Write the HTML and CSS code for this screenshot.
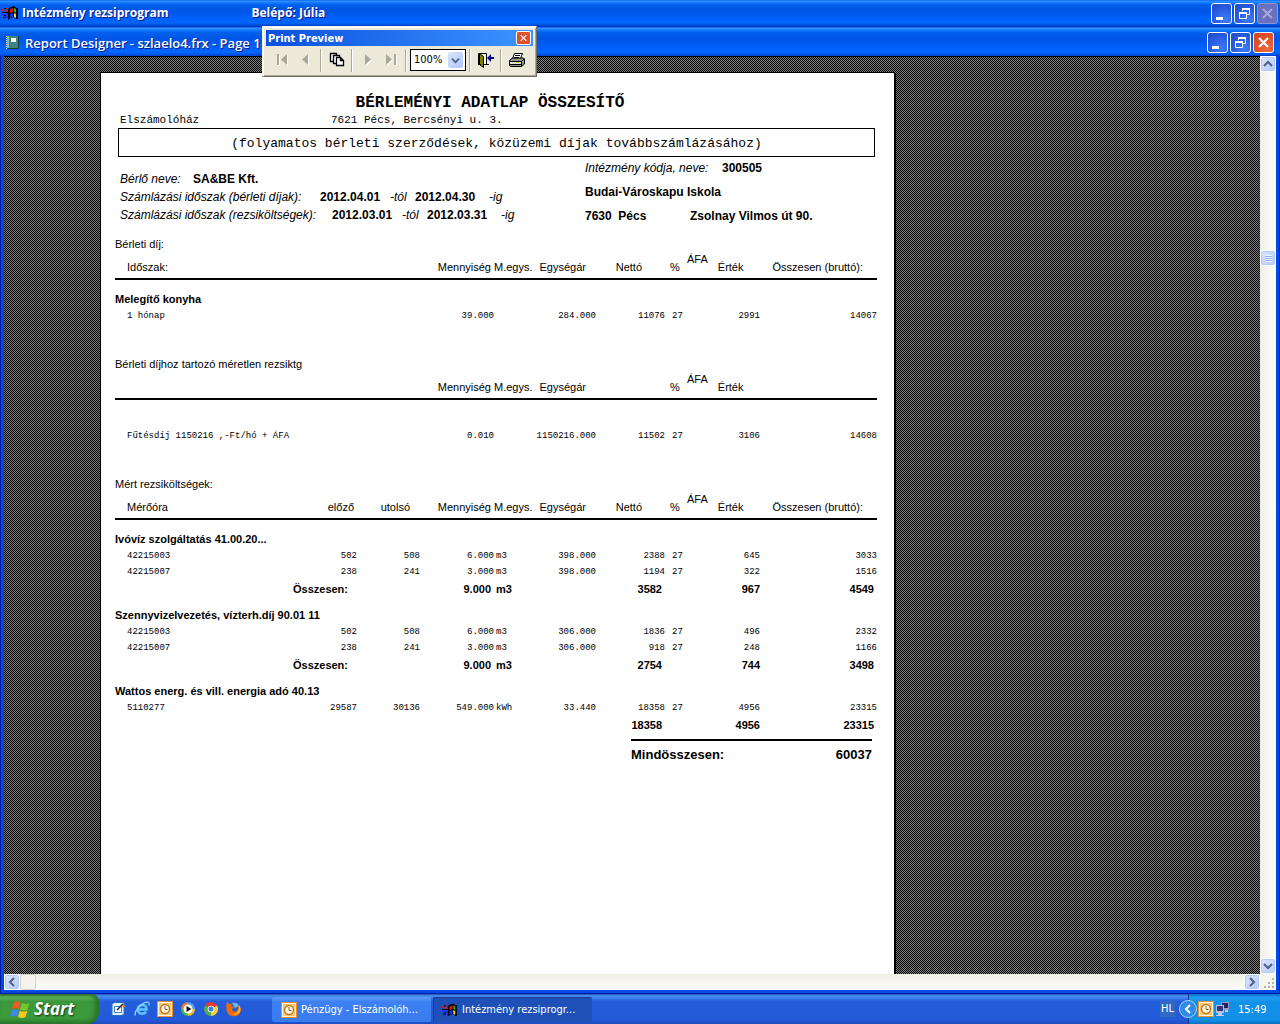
FILE: index.html
```html
<!DOCTYPE html>
<html lang="hu">
<head>
<meta charset="utf-8">
<meta name="viewport" content="width=device-width, initial-scale=1">
<title>Intézmény rezsiprogram</title>
<link rel="stylesheet" href="styles.css">
</head>
<body>
<svg class="defs" aria-hidden="true">
  <defs>
    <symbol id="flag" viewBox="0 0 17 14">
      <path fill="#000" d="M6 3l3-2 3-1 2 2 2 0v11l-2 0-2-2-3 1-3 2z"/>
      <path fill="#e81010" d="M8 3l3-1v4L8 7z"/><path fill="#10c010" d="M12 2l2 1v4l-2-1z"/>
      <path fill="#1030ff" d="M8 8l3-1v4l-3 1z"/><path fill="#f8e000" d="M12 7l2 1v4l-2-1z"/>
      <path fill="#e81010" d="M0 3h2v2H0zM3 2h2v1H3zM3 4h3v2H3z"/><path fill="#1030ff" d="M0 8h2v2H0zM3 7h3v2H3zM3 10h3v2H3z"/>
      <path fill="#000" d="M0 6h6v1H0zM1 11h3v1H1zM2 2h2v1H2zM2 9h2v1H2z"/>
    </symbol>
    <symbol id="minimize" viewBox="0 0 19 19"><path fill="#fff" d="M4 13h7v3H4z"/></symbol>
    <symbol id="restore" viewBox="0 0 19 19"><path fill="none" stroke="#fff" d="M7.500 7V4.500h7v6H12M4.500 8.500h7v6h-7z"/><path fill="#fff" d="M7 4h8v2H7zM4 8h8v2H4z"/></symbol>
    <symbol id="close" viewBox="0 0 19 19"><path stroke="#fff" stroke-width="2" d="M5 5l9 9M14 5l-9 9"/></symbol>
    <symbol id="chevron" viewBox="0 0 10 10"><path fill="none" stroke="#4d6185" stroke-width="2" d="M1 3l4 4 4-4"/></symbol>
    <symbol id="clock" viewBox="0 0 16 16">
      <path fill="#e8912c" d="M0 0h16v16H0z"/><path fill="#fff6dc" d="M1 1h14v14H1z"/><path fill="#f6c878" d="M2 2h12v12H2z"/>
      <circle cx="8" cy="8" r="4.500" fill="#fffbe9" stroke="#c87a20" stroke-width="1.500"/><path fill="none" stroke="#a05a10" d="M8 5v3.500h2.500"/>
    </symbol>
  </defs>
</svg>

<header class="titlebar app-title">
  <svg class="flag-icon"><use href="#flag"/></svg>
  <h1 class="title-text">Intézmény rezsiprogram</h1>
  <span class="title-text login">Belépő: Júlia</span>
  <div class="window-buttons">
    <button class="win-btn" aria-label="Minimize"><svg><use href="#minimize"/></svg></button>
    <button class="win-btn" aria-label="Restore"><svg><use href="#restore"/></svg></button>
    <button class="win-btn faded" aria-label="Close" disabled><svg><use href="#close"/></svg></button>
  </div>
</header>

<main class="child-window">
  <div class="titlebar child-title">
    <svg class="report-icon" viewBox="0 0 14 15"><path fill="#163c3c" d="M2 1h11v13H2z"/><path fill="#3d8585" d="M3 1h9v12H3z"/><path fill="#e8e080" d="M0 1h1v1H0zM0 3h1v1H0zM0 5h1v1H0zM0 7h1v1H0zM0 9h1v1H0zM0 11h1v1H0zM0 13h1v1H0z"/><path fill="#8fb8b8" d="M1 1h2v12H1z"/><path fill="#fff" d="M5 3h5v4H5z"/></svg>
    <h2 class="title-text">Report Designer - szlaelo4.frx - Page 1</h2>
    <div class="window-buttons">
      <button class="win-btn" aria-label="Minimize report"><svg><use href="#minimize"/></svg></button>
      <button class="win-btn" aria-label="Restore report"><svg><use href="#restore"/></svg></button>
      <button class="win-btn red" aria-label="Close report"><svg><use href="#close"/></svg></button>
    </div>
  </div>

  <div class="viewer">
    <div class="canvas">
      <article class="sheet">
        <h3 class="report-title">BÉRLEMÉNYI ADATLAP ÖSSZESÍTŐ</h3>
        <div class="address-line"><span>Elszámolóház</span><span>7621 Pécs, Bercsényi u. 3.</span></div>
        <p class="subtitle">(folyamatos bérleti szerződések, közüzemi díjak továbbszámlázásához)</p>

        <div class="parties">
          <div class="tenant">
            <div class="line tenant-name"><i>Bérlő neve:</i><b>SA&amp;BE Kft.</b></div>
            <div class="line rent-period"><i>Számlázási időszak (bérleti díjak):</i><b>2012.04.01</b><i>-tól</i><b>2012.04.30</b><i>-ig</i></div>
            <div class="line cost-period"><i>Számlázási időszak (rezsiköltségek):</i><b>2012.03.01</b><i>-tól</i><b>2012.03.31</b><i>-ig</i></div>
          </div>
          <div class="institution">
            <div class="line code"><i>Intézmény kódja, neve:</i><b>300505</b></div>
            <div class="line"><b>Budai-Városkapu Iskola</b></div>
            <div class="line city"><b>7630&nbsp; Pécs</b><b>Zsolnay Vilmos út 90.</b></div>
          </div>
        </div>

        <section class="section">
          <h4>Bérleti díj:</h4>
          <table>
            <colgroup><col class="c-name"><col class="c-prev"><col class="c-last"><col class="c-qty"><col class="c-unit"><col class="c-price"><col class="c-net"><col class="c-pct"><col class="c-vat"><col class="c-total"></colgroup>
            <thead><tr><th class="name">Időszak:</th><th></th><th></th><th class="qty">Mennyiség</th><th class="unit">M.egys.</th><th class="price">Egységár</th><th class="net">Nettó</th><th class="pct">%</th><th class="vat"><div class="vat-head"><span class="raised">ÁFA</span><span>Érték</span></div></th><th class="total">Összesen (bruttó):</th></tr></thead>
            <tbody>
              <tr class="group first"><th colspan="10">Melegítő konyha</th></tr>
              <tr><td class="name">1 hónap</td><td></td><td></td><td>39.000</td><td></td><td>284.000</td><td>11076</td><td class="pct">27</td><td>2991</td><td>14067</td></tr>
            </tbody>
          </table>
        </section>

        <section class="section">
          <h4>Bérleti díjhoz tartozó méretlen rezsiktg</h4>
          <table>
            <colgroup><col class="c-name"><col class="c-prev"><col class="c-last"><col class="c-qty"><col class="c-unit"><col class="c-price"><col class="c-net"><col class="c-pct"><col class="c-vat"><col class="c-total"></colgroup>
            <thead><tr><th></th><th></th><th></th><th class="qty">Mennyiség</th><th class="unit">M.egys.</th><th class="price">Egységár</th><th></th><th class="pct">%</th><th class="vat"><div class="vat-head"><span class="raised">ÁFA</span><span>Érték</span></div></th><th></th></tr></thead>
            <tbody>
              <tr class="group first"><th colspan="10"></th></tr>
              <tr><td class="name">Fűtésdíj 1150216 ,-Ft/hó + ÁFA</td><td></td><td></td><td>0.010</td><td></td><td>1150216.000</td><td>11502</td><td class="pct">27</td><td>3106</td><td>14608</td></tr>
            </tbody>
          </table>
        </section>

        <section class="section">
          <h4>Mért rezsiköltségek:</h4>
          <table>
            <colgroup><col class="c-name"><col class="c-prev"><col class="c-last"><col class="c-qty"><col class="c-unit"><col class="c-price"><col class="c-net"><col class="c-pct"><col class="c-vat"><col class="c-total"></colgroup>
            <thead><tr><th class="name">Mérőóra</th><th class="prev">előző</th><th class="last">utolsó</th><th class="qty">Mennyiség</th><th class="unit">M.egys.</th><th class="price">Egységár</th><th class="net">Nettó</th><th class="pct">%</th><th class="vat"><div class="vat-head"><span class="raised">ÁFA</span><span>Érték</span></div></th><th class="total">Összesen (bruttó):</th></tr></thead>
            <tbody>
              <tr class="group first"><th colspan="10">Ivóvíz szolgáltatás 41.00.20...</th></tr>
              <tr><td class="name">42215003</td><td>502</td><td>508</td><td>6.000</td><td class="unit">m3</td><td>398.000</td><td>2388</td><td class="pct">27</td><td>645</td><td>3033</td></tr>
              <tr><td class="name">42215007</td><td>238</td><td>241</td><td>3.000</td><td class="unit">m3</td><td>398.000</td><td>1194</td><td class="pct">27</td><td>322</td><td>1516</td></tr>
              <tr class="sum"><th colspan="2">Összesen:</th><td></td><td>9.000</td><td class="unit">m3</td><td></td><td>3582</td><td></td><td>967</td><td>4549</td></tr>
            </tbody>
            <tbody>
              <tr class="group"><th colspan="10">Szennyvizelvezetés, vízterh.díj 90.01 11</th></tr>
              <tr><td class="name">42215003</td><td>502</td><td>508</td><td>6.000</td><td class="unit">m3</td><td>306.000</td><td>1836</td><td class="pct">27</td><td>496</td><td>2332</td></tr>
              <tr><td class="name">42215007</td><td>238</td><td>241</td><td>3.000</td><td class="unit">m3</td><td>306.000</td><td>918</td><td class="pct">27</td><td>248</td><td>1166</td></tr>
              <tr class="sum"><th colspan="2">Összesen:</th><td></td><td>9.000</td><td class="unit">m3</td><td></td><td>2754</td><td></td><td>744</td><td>3498</td></tr>
            </tbody>
            <tbody>
              <tr class="group"><th colspan="10">Wattos energ. és vill. energia adó 40.13</th></tr>
              <tr><td class="name">5110277</td><td>29587</td><td>30136</td><td>549.000</td><td class="unit">kWh</td><td>33.440</td><td>18358</td><td class="pct">27</td><td>4956</td><td>23315</td></tr>
              <tr class="sum"><th colspan="2"></th><td></td><td></td><td></td><td></td><td>18358</td><td></td><td>4956</td><td>23315</td></tr>
            </tbody>
          </table>
        </section>

        <div class="grand-total"><span>Mindösszesen:</span><span>60037</span></div>
      </article>
    </div>

    <div class="scroll vertical">
      <button class="scroll-btn" aria-label="Scroll up"><svg class="up"><use href="#chevron"/></svg></button>
      <div class="before-thumb"></div>
      <div class="thumb"></div>
      <div class="after-thumb"></div>
      <button class="scroll-btn" aria-label="Scroll down"><svg><use href="#chevron"/></svg></button>
    </div>
    <div class="scroll horizontal">
      <button class="scroll-btn" aria-label="Scroll left"><svg class="left"><use href="#chevron"/></svg></button>
      <div class="h-thumb"></div>
      <div class="after-thumb"></div>
      <button class="scroll-btn" aria-label="Scroll right"><svg class="right"><use href="#chevron"/></svg></button>
    </div>
    <svg class="grip" viewBox="0 0 16 16"><path fill="#b8b4a2" d="M12 4h2v2h-2zM8 8h2v2H8zM12 8h2v2h-2zM4 12h2v2H4zM8 12h2v2H8zM12 12h2v2h-2z"/></svg>
  </div>
</main>

<div class="preview-bar" role="toolbar" aria-label="Print Preview">
  <div class="preview-title"><span>Print Preview</span><button aria-label="Close preview"><svg viewBox="0 0 19 19"><use href="#close"/></svg></button></div>
  <div class="tools">
    <button class="tool" aria-label="First page"><svg viewBox="0 0 16 16"><path fill="#fff" d="M3 3h2v11H3zM13 3v11L7 8.500z"/><path fill="#aca899" d="M2 2h2v11H2zM12 2v11L6 7.500z"/></svg></button>
    <button class="tool" aria-label="Previous page"><svg viewBox="0 0 16 16"><path fill="#fff" d="M11 3v11L5 8.500z"/><path fill="#aca899" d="M10 2v11L4 7.500z"/></svg></button>
    <span class="divider"></span>
    <button class="tool" aria-label="Go to page"><svg viewBox="0 0 16 16"><g fill="#fff" stroke="#000" stroke-width="1.300"><path d="M1.500 1.500h6v8h-6z"/><path d="M4.500 3.500h6v8h-6z"/><path d="M7.500 5.500h4l3 3v5h-7zM11.500 5.500v3h3"/></g></svg></button>
    <span class="divider"></span>
    <button class="tool" aria-label="Next page"><svg viewBox="0 0 16 16"><path fill="#fff" d="M6 3v11l6-5.500z"/><path fill="#aca899" d="M5 2v11l6-5.500z"/></svg></button>
    <button class="tool" aria-label="Last page"><svg viewBox="0 0 16 16"><path fill="#fff" d="M12 3h2v11h-2zM4 3v11l6-5.500z"/><path fill="#aca899" d="M11 2h2v11h-2zM3 2v11l6-5.500z"/></svg></button>
    <span class="divider"></span>
    <span class="zoom"><select aria-label="Zoom"><option>100%</option></select><span class="zoom-arrow"><svg><use href="#chevron"/></svg></span></span>
    <span class="divider"></span>
    <button class="tool" aria-label="Close"><svg viewBox="0 0 16 16"><path fill="#fff" stroke="#000" d="M.5 12.500v-11h8v11"/><path fill="#808000" stroke="#000" d="M1.500 1.500l4 3v11l-4-3z"/><path fill="#000" d="M0 12h3v1H0zM6 12h5v1H6z"/><path fill="#000090" d="M9 6l4-4v3h3v2h-3v3z"/></svg></button>
    <span class="divider"></span>
    <button class="tool" aria-label="Print"><svg viewBox="0 0 16 16"><path fill="#fff" stroke="#000" d="M5.500 1.500h8l-2 5h-8z"/><path stroke="#000" d="M6 3.500h5M5 5.500h5"/><path fill="#909090" stroke="#000" d="M.5 8.500l3-2.500h11l1 1v5l-3 2.500H1.500l-1-1z"/><path fill="#e0e0e0" d="M1 9h11v3H1z"/><path stroke="#000" d="M1 9.500h11.500M1 12.500h11M12.500 9.500v5M12.500 9.500L15 7"/><path fill="#d8d800" d="M7 10h3v1H7z"/></svg></button>
  </div>
</div>

<footer class="taskbar">
  <button class="start"><svg viewBox="0 0 17 18"><path fill="#ec5a2a" d="M3 3c2-1.500 4-1.500 6 0L7.500 8.500c-2-1-4-1-6 .2z"/><path fill="#7ac528" d="M10 3.500c2 1 4 1 6.500 0L15 9c-2 1-4 1-6.500 0z"/><path fill="#3f86ee" d="M1.300 9.700c2-1 4-1 6 0L6 15c-2-1-4-1-6 .2z"/><path fill="#f8c820" d="M8.300 10c2 1 4 1 6.500 0l-1.500 5.500c-2 1-4 1-6.500 0z"/></svg><span>Start</span></button>
  <nav class="quick" aria-label="Quick launch">
    <button aria-label="Show desktop"><svg viewBox="0 0 16 16"><path fill="#dff1ff" stroke="#2d70b8" d="M1 3.500L3 1.500h10v11l-2 2H1z"/><path fill="#fff" stroke="#3b86cc" d="M3.500 5.500h7v6h-7z"/><path stroke="#222" stroke-width="1.500" d="M6 9l6-6"/><path fill="#f08020" d="M11 4l4 1-3 2z"/></svg></button>
    <button aria-label="Internet Explorer"><svg viewBox="0 0 16 16"><path fill="none" stroke="#62c4ff" stroke-width="2.500" d="M4 8.500h8.500c0-3-2-4.500-4.300-4.500S3.800 6 3.800 8.500s2 4.300 4.400 4.300c1.800 0 3-.8 3.800-2"/><path fill="none" stroke="#8bd8ff" stroke-width="1.300" d="M1.500 14.500C-1 11 10-1 14.500 1.500c1 .5.600 2 .200 3"/></svg></button>
    <button aria-label="Calendar"><svg><use href="#clock"/></svg></button>
    <button aria-label="Media Player"><svg viewBox="0 0 16 16"><path fill="#f07828" d="M8 8V1a7 7 0 0 0-7 7z"/><path fill="#46b84a" d="M8 8H1a7 7 0 0 0 7 7z"/><path fill="#e8c030" d="M8 8v7a7 7 0 0 0 7-7z"/><path fill="#58a0e8" d="M8 8h7a7 7 0 0 0-7-7z"/><circle cx="8" cy="8" r="4.500" fill="#fff"/><path fill="#111" d="M6.500 5l5 3-5 3z"/></svg></button>
    <button aria-label="Chrome"><svg viewBox="0 0 16 16"><path fill="#e33b2e" d="M8 8L2 4.500a7 7 0 0 1 12.100 0z"/><path fill="#f9d030" d="M8 8l6.100-3.500A7 7 0 0 1 8 15z"/><path fill="#4caf50" d="M8 8v7A7 7 0 0 1 2 4.500z"/><circle cx="8" cy="8" r="3.300" fill="#fff"/><circle cx="8" cy="8" r="2.500" fill="#3a7de0"/></svg></button>
    <button aria-label="Firefox"><svg viewBox="0 0 16 16"><circle cx="8" cy="7.500" r="6.500" fill="#2f62b8"/><path fill="#6fb8f0" d="M6 2c3-1 6 0 7 3l-4 2z"/><path fill="#ec6a12" d="M1 1l3 2 2 0-1 2 3 1-2 2c0 3 4 4 6 1 1-2 0-4-1-5 3 1 4 4 4 5-1 6-6 7-9 6C1 14-1 8 1 1z"/><path fill="#fbb62c" d="M13 4c2 2 2 6 0 8-2 2-5 2-6 1 4 0 6-3 6-9z"/></svg></button>
  </nav>
  <div class="tasks">
    <button class="task"><svg class="task-icon"><use href="#clock"/></svg><span>Pénzügy - Elszámolóh...</span></button>
    <button class="task active"><svg class="task-icon"><use href="#flag"/></svg><span>Intézmény rezsiprogr...</span></button>
  </div>
  <span class="lang">HL</span>
  <div class="tray">
    <button class="tray-toggle" aria-label="Show hidden icons"><svg viewBox="0 0 18 18"><circle cx="9" cy="9" r="8.500" fill="#2f8ae8" stroke="#a6d2fa"/><path fill="none" stroke="#fff" stroke-width="2" d="M11 5L7 9l4 4"/></svg></button>
    <svg class="tray-icon"><use href="#clock"/></svg>
    <svg class="tray-icon" viewBox="0 0 16 16"><path fill="#9499c8" d="M6 1h8v8H6z"/><path fill="#20265c" d="M7 2h6v5H7z"/><path fill="#c8cce8" d="M10 9h3v2h-3zM3 12h4v2H3zM1 14h8v1H1z"/><path fill="#b8bce0" d="M1 4h8v8H1z"/><path fill="#303a78" d="M2 5h6v5H2z"/></svg>
    <time>15:49</time>
  </div>
</footer>
</body>
</html>
```
FILE: styles.css
```css
:root {
  --tahoma: "DejaVu Sans Condensed", "DejaVu Sans", sans-serif;
  --caption: "Open Sans", "Noto Sans", sans-serif;
  --arial: "Liberation Sans", Arial, sans-serif;
  --courier: "Liberation Mono", "Courier New", monospace;
}

* { box-sizing: border-box; }

body {
  margin: 0;
  min-height: 100vh;
  display: flex;
  flex-direction: column;
  position: relative;
  background: #0048e0;
  font-family: var(--tahoma);
  font-size: 11px;
}

h1, h2, h3, h4, p { margin: 0; font-weight: inherit; font-size: inherit; }
button { padding: 0; border: 0; background: none; font: inherit; color: inherit; }
svg { display: block; }
.defs { display: none; }

/* Title bars */
.titlebar {
  display: flex;
  align-items: center;
  background: linear-gradient(#0058ee 0, #3593ff 4%, #127dff 10%, #0262ee 18%, #0054e3 40%, #0060fc 70%, #0066ff 88%, #0050d8 96%, #003dd7);
}
.app-title { height: 26px; padding: 0 2px; }
.title-text {
  font-family: var(--caption);
  font-size: 12px;
  font-weight: 700;
  line-height: 18px;
  color: #fff;
  text-shadow: 1px 1px #0a1883;
  white-space: nowrap;
}
.child-title .title-text { font-size: 13px; font-weight: 600; }
.flag-icon { width: 17px; height: 14px; margin-right: 3px; }
.report-icon { width: 14px; height: 15px; margin-right: 5px; }
.login { margin-left: 83px; }
.window-buttons { display: flex; gap: 2px; margin-left: auto; }
.win-btn {
  width: 21px;
  height: 21px;
  border: 1px solid #fff;
  border-radius: 3px;
  background: radial-gradient(circle at 70% 80%, #3c7cf8, #2a5ce0 55%, #1c48c0);
}
.win-btn svg { width: 19px; height: 19px; }
.red { background: radial-gradient(circle at 70% 80%, #f06a38, #e0502a 55%, #c8442a); }
.faded { background: #6a70bd; border-color: #8c94d4; }
.faded svg { opacity: .4; }

/* Report window */
.child-window {
  flex: 1;
  display: flex;
  flex-direction: column;
  padding: 0 4px 4px;
  background: #0048e8;
  border-top: 1px solid #0038c8;
  box-shadow: inset 1px -1px #001ca0, inset -1px 0 #001ca0;
}
.child-title { margin: 0 -4px; padding: 2px 6px 0; height: 29px; }
.viewer {
  flex: 1;
  display: grid;
  grid-template-columns: 1fr 16px;
  grid-template-rows: 1fr 16px;
}
.canvas {
  display: flex;
  padding: 15px 0 0 96px;
  background: repeating-conic-gradient(#000 0 25%, #808080 0 50%) 0 0 / 2px 2px;
  border-top: 1px solid #000;
}

/* Scroll bars */
.scroll { display: flex; }
.vertical { flex-direction: column; background: linear-gradient(90deg, #f0efe6, #fefefb); }
.horizontal { background: linear-gradient(#f0efe6, #fefefb); }
.scroll-btn, .thumb {
  flex: none;
  display: grid;
  place-items: center;
  width: 16px;
  height: 16px;
  border: 1px solid #fff;
  border-radius: 3px;
  background: linear-gradient(135deg, #d8e4fe, #b8ccfa);
  box-shadow: inset 0 0 0 1px #b4c8f6;
}
.scroll-btn svg { width: 10px; height: 10px; }
.up { transform: rotate(180deg); }
.left { transform: rotate(90deg); }
.right { transform: rotate(-90deg); }
.before-thumb { flex: 178; }
.vertical .after-thumb { flex: 692; }
.horizontal .after-thumb { flex: 1; }
.thumb::before {
  content: "";
  width: 7px;
  height: 7px;
  background: repeating-linear-gradient(#eef4fe 0 1px, #8cb0f8 1px 2px);
}
.h-thumb { width: 16px; height: 16px; border: 1px solid #d6d3c8; border-radius: 3px; background: #f4f3ee; }
.grip { width: 16px; height: 16px; background: #f6f5ee; }

/* Printed sheet */
.sheet {
  width: 795px;
  padding: 21px 17px 0 14px;
  border: 1px solid #000;
  border-bottom: 0;
  background: #fff;
  color: #000;
  font-family: var(--arial);
  box-shadow: 1px 1px #000;
}
.report-title {
  padding-right: 12px;
  text-align: center;
  font: 700 16px/18px var(--courier);
}
.address-line {
  display: grid;
  grid-template-columns: 211px 1fr;
  padding-left: 5px;
  font: 11px/16px var(--courier);
}
.subtitle {
  margin: 0 2px 0 3px;
  border: 1px solid #000;
  text-align: center;
  padding-top: 2px;
  font: 13px/25px var(--courier);
}
.parties {
  display: grid;
  grid-template-columns: 465px 1fr;
  padding: 0 0 7px 5px;
  font-size: 12px;
  white-space: nowrap;
}
.tenant { padding-top: 13px; line-height: 18px; }
.institution { margin-top: -1px; line-height: 24px; }
.line { display: grid; }
.tenant-name { grid-template-columns: 73px 1fr; }
.rent-period { grid-template-columns: 200px 70px 25px 74px 1fr; }
.cost-period { grid-template-columns: 212px 70px 25px 74px 1fr; }
.code { grid-template-columns: 137px 1fr; }
.city { grid-template-columns: 105px 1fr; }

.section { margin-bottom: 32px; font-size: 11px; line-height: 16px; }
.section:last-of-type { margin-bottom: 5px; }
.sheet > .section:first-of-type { margin-top: 1px; }
table { width: 100%; table-layout: fixed; border-collapse: separate; border-spacing: 0; }
.c-name { width: 182px; }
.c-prev { width: 60px; }
.c-last { width: 63px; }
.c-qty { width: 74px; }
.c-unit { width: 40px; }
.c-price { width: 62px; }
.c-net { width: 69px; }
.c-pct { width: 19px; }
.c-vat { width: 76px; }
th, td { padding: 0; white-space: nowrap; text-align: right; }
thead th {
  height: 28px;
  padding-bottom: 3px;
  border-bottom: 2px solid #000;
  vertical-align: bottom;
  font-weight: 400;
}
thead .prev { padding-right: 3px; }
thead .last { padding-right: 10px; }
thead .qty { padding-right: 3px; }
thead .price { padding-right: 10px; }
thead .net { padding-right: 23px; }
thead .pct { padding-left: 5px; }
thead .total { padding-right: 14px; }
.vat-head { display: flex; gap: 10px; padding-left: 3px; }
.raised { margin-bottom: 8px; margin-top: -8px; }
td { font: 9px/16px var(--courier); }
.name { padding-left: 12px; text-align: left; }
td.unit { padding-left: 2px; text-align: left; }
td.pct { padding-left: 7px; text-align: left; }
thead .unit { text-align: left; }
thead .pct { text-align: left; }
.group th { height: 26px; line-height: 18px; text-align: left; vertical-align: bottom; }
.first th { height: 28px; }
.sum th, .sum td { font: 700 11px/18px var(--arial); }
.sum th { padding-right: 9px; }
.sum td { padding-right: 3px; }
.sum td:nth-last-child(2) { padding-right: 0; }

.grand-total {
  display: flex;
  justify-content: space-between;
  margin: 0 5px 0 auto;
  width: 241px;
  padding-top: 5px;
  border-top: 2px solid #000;
  font: 700 13px/18px var(--arial);
}

/* Print Preview toolbar, floating over both windows */
.preview-bar {
  position: absolute;
  left: 262px;
  top: 26px;
  width: 275px;
  padding: 3px;
  background: #ece9d8;
  border: 1px solid;
  border-color: #f4f2e8 #716f64 #716f64 #f4f2e8;
  box-shadow: inset 1px 1px #fff, inset -1px -1px #aca899;
}
.preview-title {
  display: flex;
  justify-content: space-between;
  align-items: center;
  height: 16px;
  padding: 0 2px;
  background: linear-gradient(90deg, #0a50e0, #3d95ff);
  color: #fff;
  font-weight: 700;
}
.preview-title button { width: 15px; height: 14px; border: 1px solid #fff; border-radius: 2px; background: #e0502a; }
.preview-title svg { width: 13px; height: 12px; }
.tools { display: flex; align-items: center; height: 27px; padding: 1px 0 0 5px; }
.tool { display: grid; place-items: center; width: 23px; height: 22px; }
.tool svg { width: 16px; height: 16px; }
.divider { width: 2px; height: 23px; margin: 0 3px; border-left: 1px solid #aca899; border-right: 1px solid #fff; }
.zoom { display: grid; width: 56px; height: 22px; border: 1px solid #000; background: #fff; }
.zoom select, .zoom-arrow { grid-area: 1 / 1; }
.zoom select { appearance: none; border: 0; padding: 0 3px; background: none; font: 11px/20px var(--tahoma); color: #000; }
.zoom-arrow {
  justify-self: end;
  display: grid;
  place-items: center;
  width: 15px;
  margin: 2px;
  border-radius: 2px;
  background: linear-gradient(135deg, #d8e4fe, #b0c8f8);
  pointer-events: none;
}
.zoom-arrow svg { width: 9px; height: 9px; }

/* Taskbar */
.taskbar {
  display: flex;
  align-items: stretch;
  height: 30px;
  color: #fff;
  background: linear-gradient(#1c4cb8 0, #4a90e8 6%, #3a80f0 12%, #245edb 24%, #2259d8 85%, #1c4cc0);
}
.start {
  display: flex;
  align-items: center;
  gap: 4px;
  width: 99px;
  padding-left: 10px;
  border-radius: 0 8px 12px 0;
  background: linear-gradient(#2f7030, #5eb35e 10%, #3c983c 25%, #3c9a3c 80%, #2c7a2c);
  box-shadow: inset -4px 0 5px #2a702a;
  font: italic 700 17px/24px var(--caption);
  text-shadow: 1px 1px 2px #103810;
}
.start svg { flex: none; width: 20px; height: 21px; }
.quick { display: flex; align-items: center; gap: 7px; margin-left: 12px; }
.quick svg { width: 16px; height: 16px; }
.tasks { flex: 1; display: flex; align-items: center; gap: 2px; margin-left: 30px; padding-top: 1px; }
.task {
  display: flex;
  align-items: center;
  gap: 4px;
  flex: 0 1 159px;
  height: 25px;
  padding: 0 9px;
  border-radius: 2px;
  background: linear-gradient(#5a9cf8, #3c80f2 20%, #3a7cf0);
  white-space: nowrap;
}
.active { background: #1e50b8; box-shadow: inset 1px 1px #183c90; }
.task-icon { flex: none; width: 16px; height: 16px; }
.lang { align-self: center; padding: 0 1px; margin-right: 13px; line-height: 16px; background: #316ac5; }
.tray {
  display: flex;
  align-items: center;
  gap: 1px;
  width: 92px;
  border-left: 1px solid #0a3a90;
  background: linear-gradient(#1070c8, #1c9cf0 12%, #1290e8 30%, #1290e8 85%, #0c70c0);
}
.tray-toggle { margin-left: -10px; }
.tray-toggle svg { width: 18px; height: 18px; }
.tray-icon { width: 16px; height: 16px; }
.tray time { margin-left: 6px; }
```
